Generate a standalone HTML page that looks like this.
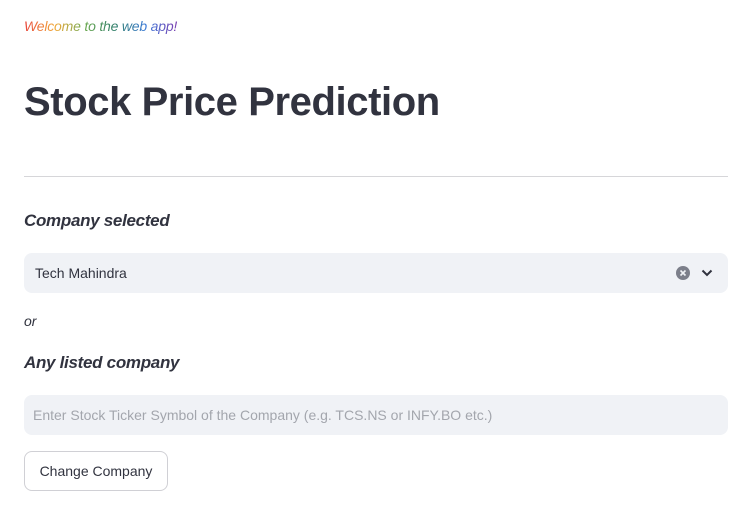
<!DOCTYPE html>
<html><head><style>
body{margin:0;width:741px;height:506px;background:#fff;font-family:"Liberation Sans",sans-serif;color:#31333f;position:relative;overflow:hidden}
.a{position:absolute}
.w{left:24px;top:18px;font-size:14px;font-style:italic;background:linear-gradient(90deg,#e8453c,#f2a93b,#6aa84f,#2e7d6b,#3d7bd9,#7b3fb0);-webkit-background-clip:text;background-clip:text;color:transparent;letter-spacing:-0.2px}
h1{position:absolute;left:24px;top:80px;margin:0;font-size:40px;font-weight:bold;letter-spacing:-0.4px;color:#31333f}
.hr{left:24px;top:176px;width:704px;height:1px;background:#d6d6d9}
.lab{left:24px;font-size:17px;font-style:italic;font-weight:bold;letter-spacing:-0.3px}
.box{left:24px;width:704px;height:40px;background:#f0f2f6;border-radius:8px}
.btn{left:24px;top:451px;width:142px;height:38px;border:1px solid #d0d0d5;border-radius:8px;font-size:14px;line-height:38px;text-align:center}
</style></head><body>
<div class="a w">Welcome to the web app!</div>
<h1>Stock Price Prediction</h1>
<div class="a hr"></div>
<div class="a lab" style="top:211px">Company selected</div>
<div class="a box" style="top:253px"><span class="a" style="left:11px;top:12px;font-size:14px">Tech Mahindra</span>
<svg class="a" style="left:651px;top:12px" width="16" height="16"><circle cx="8" cy="8" r="7" fill="#7c7f8a"/><path d="M5.5 5.5l5 5M10.5 5.5l-5 5" stroke="#f0f2f6" stroke-width="1.6"/></svg>
<svg class="a" style="left:676px;top:14px" width="14" height="12"><path d="M2.5 3.5l4.5 4.5 4.5-4.5" stroke="#31333f" stroke-width="2" fill="none"/></svg></div>
<div class="a" style="left:24px;top:313px;font-size:14px;font-style:italic">or</div>
<div class="a lab" style="top:353px">Any listed company</div>
<div class="a box" style="top:395px"><span class="a" style="left:9px;top:12px;font-size:14px;color:#a3a6ad">Enter Stock Ticker Symbol of the Company (e.g. TCS.NS or INFY.BO etc.)</span></div>
<div class="a btn">Change Company</div>
</body></html>
